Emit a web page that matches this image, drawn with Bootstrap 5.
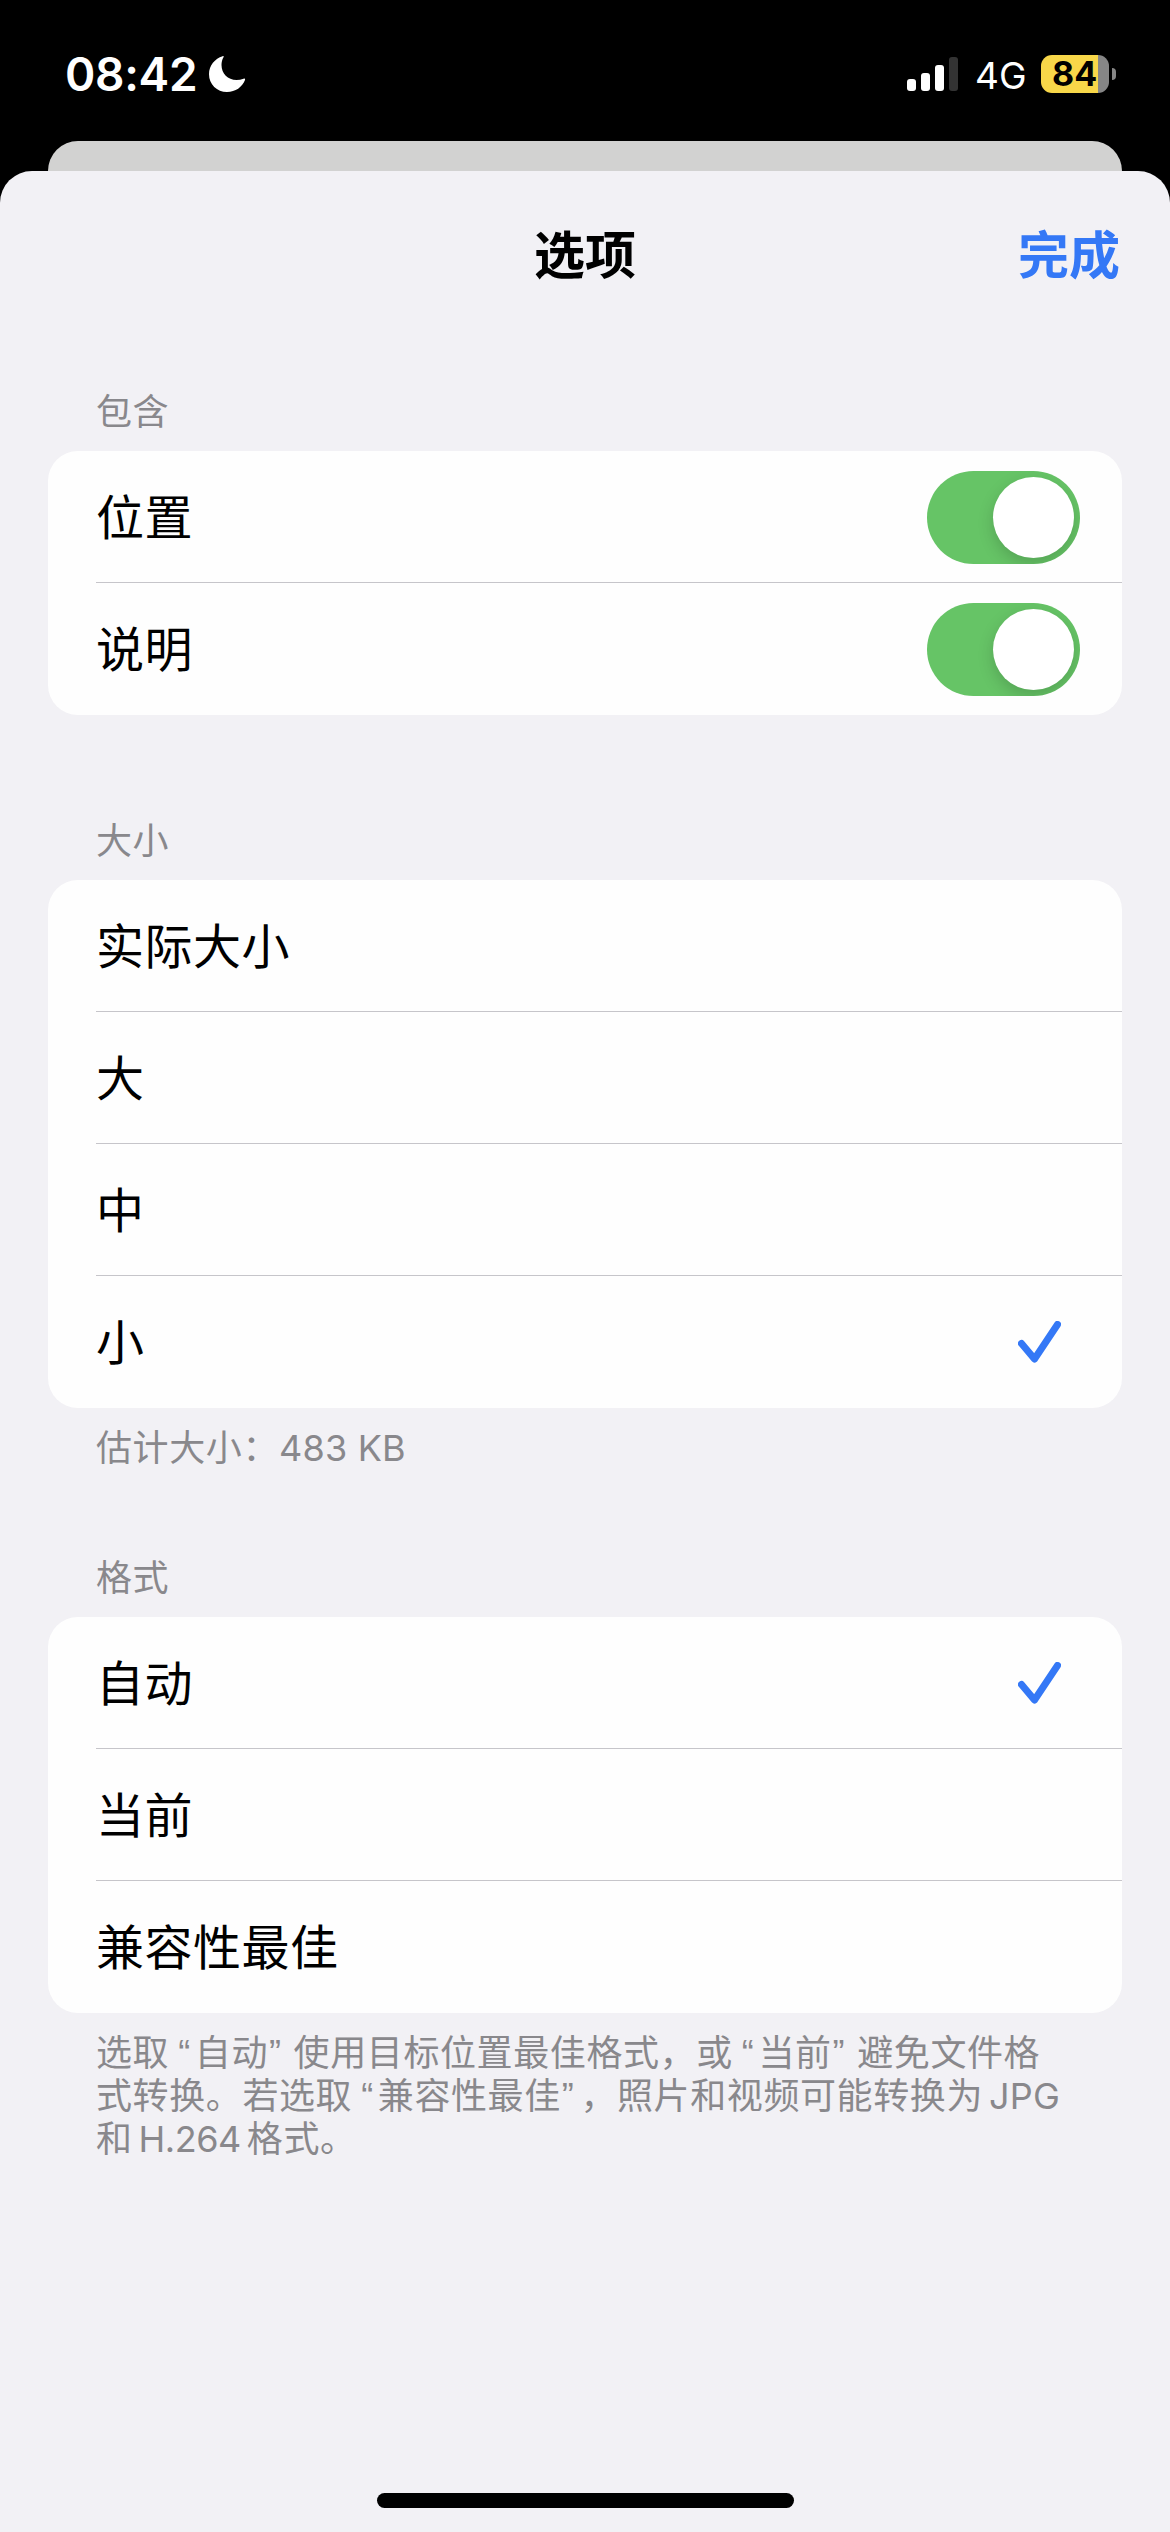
<!DOCTYPE html>
<html lang="zh-CN">
<head>
<meta charset="utf-8">
<meta name="viewport" content="width=device-width, initial-scale=1">
<title>选项</title>
<link href="https://cdn.jsdelivr.net/npm/bootstrap@5.3.0/dist/css/bootstrap.min.css" rel="stylesheet">
<style>
  :root { --ios-blue: #3478f6; --sheet: #f2f1f5; --hair: #c6c5ca; --muted: #89888c; }
  body { background: #000; color: #000; font-family: Inter, "Noto Sans CJK SC", sans-serif; width: 1170px; height: 2532px; overflow: hidden; text-spacing-trim: space-all; }
  svg { display: block; flex: none; }

  .status { height: 141px; padding: 55px 54px 48px 65px; color: #fff; }
  .clock { font-size: 46px; font-weight: 600; line-height: 39px; letter-spacing: -.3px; width: 144px; }
  .network { font-size: 37px; line-height: 38px; margin: 2px 16px 0 16px; width: 50px; }
  .battery { width: 68px; height: 38px; border-radius: 11px; background: linear-gradient(90deg, #f8d749 57px, #868686 57px); color: #000; font-size: 34px; font-weight: 700; line-height: 38px; padding-left: 11px; }
  .battery-tip { width: 4px; height: 12px; margin-left: 3px; border-radius: 0 5px 5px 0; background: #868686; }

  .behind { height: 30px; margin: 0 48px; border-radius: 32px 32px 0 0; background: #d2d2d1; }
  .sheet { height: 2361px; background: var(--sheet); border-radius: 32px 32px 0 0; }
  .sheet-head { height: 168px; padding: 2px 50px 0; }
  .sheet-head > * { font-size: 51px; font-weight: 600; line-height: 60px; }
  .done { color: var(--ios-blue); text-decoration: none; }

  .group { padding: 0 48px; }
  .caption { font-size: 36px; font-weight: 400; line-height: 42px; letter-spacing: .6px; color: var(--muted); padding-left: 48px; margin: 0; white-space: nowrap; }
  .latin { letter-spacing: .2px; }
  .list-group { --bs-list-group-border-width: 0; --bs-list-group-border-radius: 30px; --bs-list-group-bg: #fefefe; --bs-list-group-color: #000; --bs-list-group-item-padding-x: 0; --bs-list-group-item-padding-y: 0; }
  .list-group-item { padding-left: 48px; }
  .line { height: 132px; padding-top: 2px; border-bottom: 1px solid var(--hair); font-size: 48px; line-height: 60px; letter-spacing: .5px; }
  .list-group-item:last-child .line { border-bottom-color: transparent; }

  .form-switch { padding: 0; margin: 0; min-height: 0; }
  .form-switch .form-check-input { float: none; display: block; width: 153px; height: 93px; margin: 0 42px 0 0; border: 0; border-radius: 47px; background: #66c466; padding: 6px; overflow: hidden; }
  .form-switch .form-check-input:checked { background: #66c466; }
  .form-switch .form-check-input::after { content: ""; display: block; width: 81px; height: 81px; margin-left: 60px; border-radius: 50%; background: #fff; box-shadow: 0 6px 16px rgba(0,0,0,.17); }
  .tick { margin: 0 61px 2px 0; }
  .ql, .qr { font-family: "Liberation Sans", sans-serif; }
  .ql { margin-left: 9px; margin-right: 4px; }
  .qr { margin-left: 1px; margin-right: 12px; }
  .qr.tight { margin-right: 6px; }
  .home { width: 417px; height: 15px; border-radius: 8px; background: #000; margin-bottom: 24px; }
</style>
</head>
<body>
<header class="status d-flex justify-content-between">
  <div class="d-flex">
    <div class="clock">08:42</div>
    <svg width="37" height="37" viewBox="0 0 37 37"><path fill="#fff" d="M13.6 1.2C6 3.6 0 10.4 0 19.2 0 29.2 8 37 18 37c8.500 0 15.300-5 18-12 .4-1-.4-1.700-1.400-1.300-2.300.9-4.700 1.300-7.100 1.300-8.700 0-15-6.500-15-15 0-3 .7-5.600 1.900-7.600.6-1 .2-1.500-.8-1.200z"/></svg>
  </div>
  <div class="d-flex">
    <svg width="52" height="38" viewBox="0 0 52 38"><g fill="#fff"><rect y="24" width="9" height="12" rx="3"/><rect x="14" y="18" width="9" height="18" rx="3"/><rect x="28" y="10" width="9" height="26" rx="3"/></g><rect x="42" y="2" width="9" height="34" rx="3" fill="#333"/></svg>
    <div class="network">4G</div>
    <div class="battery">84</div>
    <div class="battery-tip align-self-center"></div>
  </div>
</header>
<div class="behind"></div>
<main class="sheet d-flex flex-column">
  <div class="sheet-head d-flex align-items-center justify-content-between">
    <span class="invisible">完成</span>
    <h1 class="m-0">选项</h1>
    <a href="#" class="done">完成</a>
  </div>

  <section class="group" style="padding-top:52px">
    <h2 class="caption">包含</h2>
    <ul class="list-group" style="margin-top:18px">
      <li class="list-group-item"><label class="line d-flex align-items-center justify-content-between">位置<span class="form-check form-switch"><input class="form-check-input" type="checkbox" role="switch" checked></span></label></li>
      <li class="list-group-item"><label class="line d-flex align-items-center justify-content-between">说明<span class="form-check form-switch"><input class="form-check-input" type="checkbox" role="switch" checked></span></label></li>
    </ul>
  </section>

  <section class="group" style="padding-top:105px">
    <h2 class="caption">大小</h2>
    <ul class="list-group" style="margin-top:18px">
      <li class="list-group-item"><div class="line d-flex align-items-center">实际大小</div></li>
      <li class="list-group-item"><div class="line d-flex align-items-center">大</div></li>
      <li class="list-group-item"><div class="line d-flex align-items-center">中</div></li>
      <li class="list-group-item"><div class="line d-flex align-items-center justify-content-between">小<svg class="tick" width="43" height="42" viewBox="0 0 43 42" fill="none" stroke="#3478f6" stroke-width="7" stroke-linecap="round" stroke-linejoin="round"><path d="M3.500 22.500L16.500 38 39.500 3.500"/></svg></div></li>
    </ul>
    <p class="caption" style="margin-top:19px">估计大小：<span class="latin">483 KB</span></p>
  </section>

  <section class="group" style="padding-top:88px">
    <h2 class="caption">格式</h2>
    <ul class="list-group" style="margin-top:18px">
      <li class="list-group-item"><div class="line d-flex align-items-center justify-content-between">自动<svg class="tick" width="43" height="42" viewBox="0 0 43 42" fill="none" stroke="#3478f6" stroke-width="7" stroke-linecap="round" stroke-linejoin="round"><path d="M3.500 22.500L16.500 38 39.500 3.500"/></svg></div></li>
      <li class="list-group-item"><div class="line d-flex align-items-center">当前</div></li>
      <li class="list-group-item"><div class="line d-flex align-items-center">兼容性最佳</div></li>
    </ul>
    <p class="caption" style="margin-top:19px">选取<span class="ql">“</span>自动<span class="qr">”</span>使用目标位置最佳格式，或<span class="ql">“</span>当前<span class="qr">”</span>避免文件格<br>式转换。若选取<span class="ql">“</span>兼容性最佳<span class="qr tight">”</span>，照片和视频可能转换为<span class="latin" style="margin-left:6px">JPG</span><br>和<span class="latin" style="margin:0 6px;letter-spacing:-.5px">H.264</span>格式。</p>
  </section>
  <div class="home mt-auto mx-auto"></div>
</main>
<script src="https://cdn.jsdelivr.net/npm/bootstrap@5.3.0/dist/js/bootstrap.bundle.min.js"></script>
</body>
</html>
